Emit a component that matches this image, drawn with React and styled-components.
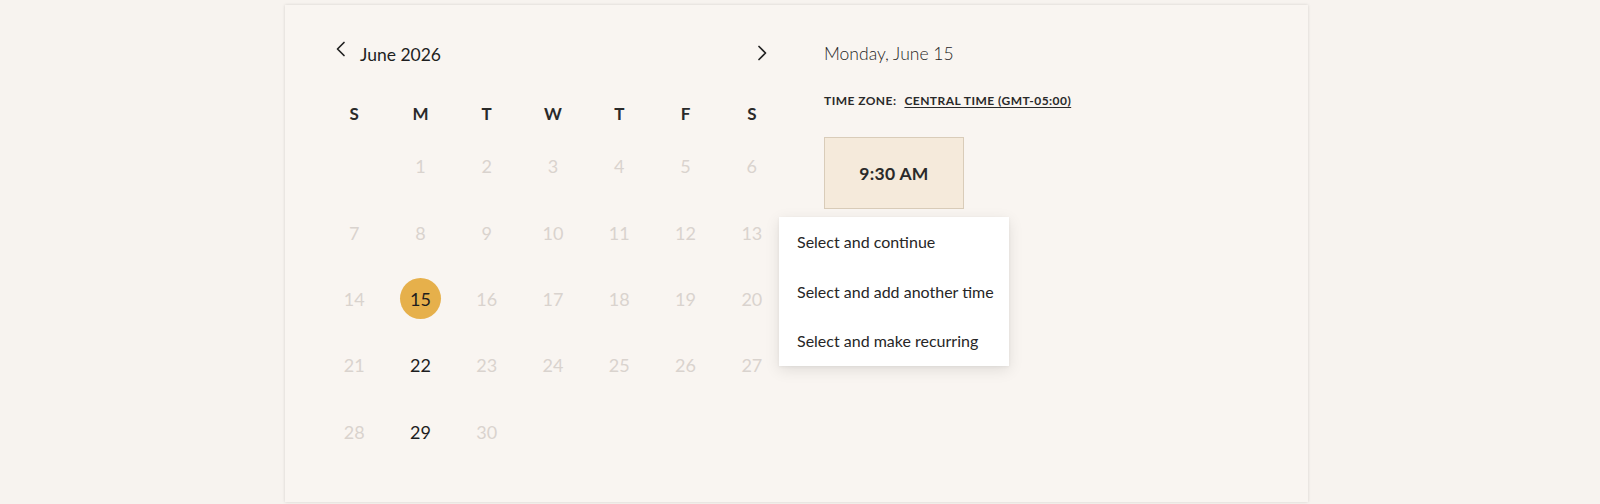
import React from "react";
import styled, { createGlobalStyle } from "styled-components";

const Global = createGlobalStyle`
  html, body { margin: 0; padding: 0; background: #f7f3ef; }
  body { font-family: Lato, "Open Sans", sans-serif; color: #222; }
`;

const Page = styled.div`
  width: 1600px;
  height: 504px;
  padding-top: 5px;
  box-sizing: border-box;
  overflow: hidden;
`;

const Card = styled.div`
  margin-left: 285px;
  width: 1023px;
  height: 497px;
  box-sizing: border-box;
  background: #f9f5f1;
  box-shadow: 0 0 3px rgba(0, 0, 0, 0.14);
  padding: 30px 0 0 36px;
  display: flex;
  gap: 39px;
`;

const Calendar = styled.div`
  width: 464px;
  display: flex;
  flex-direction: column;
`;

const NavRow = styled.div`
  height: 35px;
  display: flex;
  align-items: center;
`;

const NavButton = styled.button`
  border: 0;
  background: none;
  padding: 0;
  width: 20px;
  height: 20px;
  display: flex;
  align-items: center;
  justify-content: center;
  cursor: pointer;
  color: #222;
  margin-left: ${(p) => p.$ml || 0}px;
  margin-right: ${(p) => p.$mr || 0}px;
  transform: translateY(${(p) => p.$dy || 0}px);
`;

const MonthTitle = styled.div`
  font-size: 17.5px;
  font-weight: 400;
  margin-left: 9px;
  flex: 1;
  transform: translateY(2px);
  color: #1f1f1f;
`;

const Weekdays = styled.div`
  margin-top: 26px;
  height: 34px;
  display: grid;
  grid-template-columns: repeat(7, 1fr);
  align-items: center;
`;

const Weekday = styled.div`
  text-align: center;
  font-size: 17px;
  font-weight: 700;
  color: #2a2a2a;
`;

const Days = styled.div`
  margin-top: 3px;
  display: grid;
  grid-template-columns: repeat(7, 1fr);
  grid-auto-rows: 66.4px;
`;

const DayCell = styled.div`
  display: flex;
  align-items: center;
  justify-content: center;
`;

const Day = styled.div`
  width: 41px;
  height: 41px;
  border-radius: 50%;
  display: flex;
  align-items: center;
  justify-content: center;
  font-size: 18px;
  color: ${(p) => (p.$available ? "#1e1e1e" : "#d9d3ce")};
  background: ${(p) => (p.$selected ? "#e6b04b" : "transparent")};
  cursor: ${(p) => (p.$available ? "pointer" : "default")};
`;

const Side = styled.div`
  display: flex;
  flex-direction: column;
  padding-top: 4px;
`;

const DateTitle = styled.div`
  font-size: 17.5px;
  font-weight: 300;
  color: #1f1f1f;
  height: 30px;
  line-height: 30px;
`;

const TimeZone = styled.div`
  margin-top: 24px;
  font-size: 12px;
  font-weight: 700;
  letter-spacing: 0.45px;
  text-transform: uppercase;
  color: #2a2a2a;
  display: flex;
  gap: 8px;
`;

const ZoneLink = styled.span`
  text-decoration: underline;
  text-underline-offset: 2px;
  cursor: pointer;
`;

const SlotWrap = styled.div`
  position: relative;
  margin-top: 29px;
`;

const Slot = styled.button`
  width: 140px;
  height: 72px;
  box-sizing: border-box;
  background: #f5eadb;
  border: 1px solid #d9ccb9;
  font-family: inherit;
  font-size: 17.5px;
  font-weight: 700;
  color: #2a2a2a;
  letter-spacing: 0.3px;
  cursor: pointer;
`;

const Menu = styled.div`
  position: absolute;
  left: -45px;
  top: 80px;
  width: 230px;
  height: 149px;
  background: #fff;
  box-shadow: 0 4px 14px rgba(0, 0, 0, 0.1), 0 1px 3px rgba(0, 0, 0, 0.05);
  display: flex;
  flex-direction: column;
  box-sizing: border-box;
`;

const MenuItem = styled.div`
  height: 49.6px;
  display: flex;
  align-items: center;
  padding-left: 18px;
  font-size: 16px;
  color: #262626;
  cursor: pointer;
`;

const Chevron = ({ dir }) => (
  <svg width="18" height="18" viewBox="0 0 18 18" fill="none" stroke="#222" strokeWidth="1.7" strokeLinecap="round" strokeLinejoin="round">
    {dir === "left" ? <path d="M12 2.5 L5.5 9 L12 15.5" /> : <path d="M6 2.5 L12.5 9 L6 15.5" />}
  </svg>
);

const weekdays = ["S", "M", "T", "W", "T", "F", "S"];

export default function App() {
  const cells = [null];
  for (let d = 1; d <= 30; d++) cells.push(d);
  const available = new Set([15, 22, 29]);
  return (
    <Page>
      <Global />
      <Card>
        <Calendar>
          <NavRow>
            <NavButton $ml={10} $dy={-4} aria-label="Previous month">
              <Chevron dir="left" />
            </NavButton>
            <MonthTitle>June 2026</MonthTitle>
            <NavButton $mr={13} aria-label="Next month">
              <Chevron dir="right" />
            </NavButton>
          </NavRow>
          <Weekdays>
            {weekdays.map((w, i) => (
              <Weekday key={i}>{w}</Weekday>
            ))}
          </Weekdays>
          <Days>
            {cells.map((d, i) => (
              <DayCell key={i}>
                {d && (
                  <Day $available={available.has(d)} $selected={d === 15}>
                    {d}
                  </Day>
                )}
              </DayCell>
            ))}
          </Days>
        </Calendar>
        <Side>
          <DateTitle>Monday, June 15</DateTitle>
          <TimeZone>
            <span>Time zone:</span>
            <ZoneLink>Central Time (GMT-05:00)</ZoneLink>
          </TimeZone>
          <SlotWrap>
            <Slot>9:30 AM</Slot>
            <Menu>
              <MenuItem>Select and continue</MenuItem>
              <MenuItem>Select and add another time</MenuItem>
              <MenuItem>Select and make recurring</MenuItem>
            </Menu>
          </SlotWrap>
        </Side>
      </Card>
    </Page>
  );
}
